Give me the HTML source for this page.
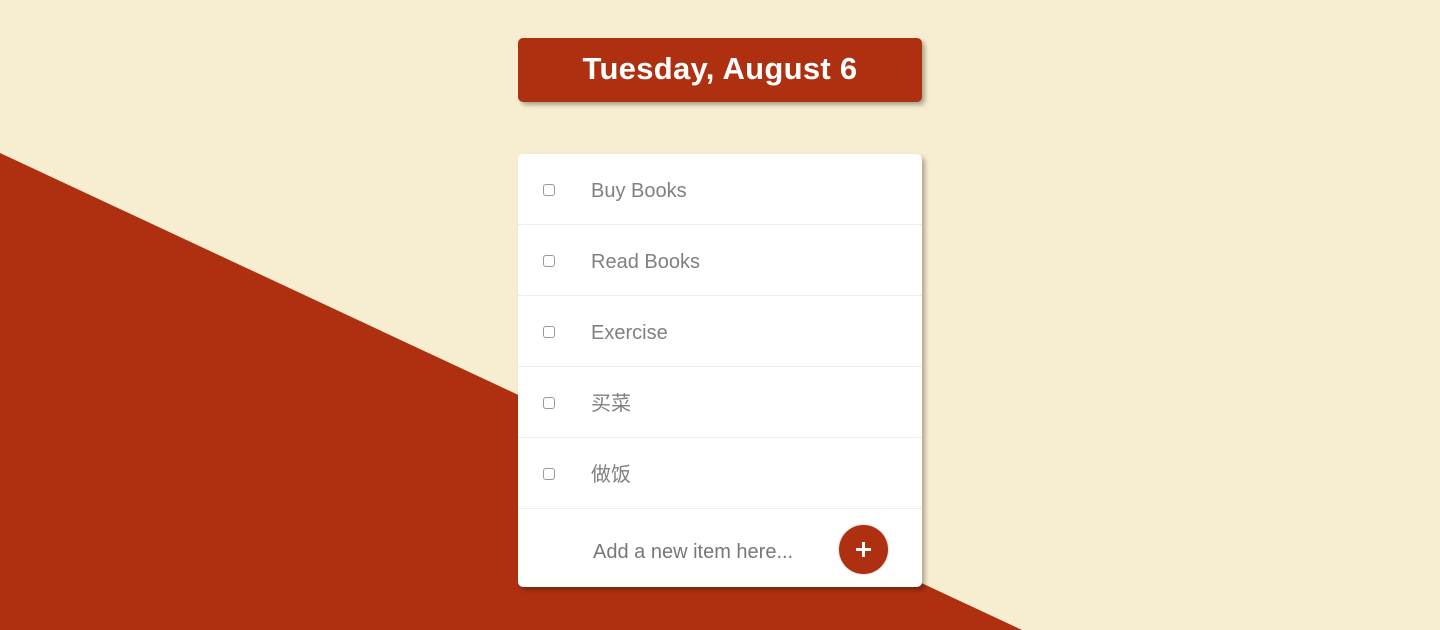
<!DOCTYPE html>
<html><head><meta charset="utf-8"><style>
html,body{margin:0;padding:0;width:1440px;height:630px;overflow:hidden;background:#F7EDD0;font-family:"Liberation Sans","Noto Sans CJK SC",sans-serif;position:relative}
.tri{position:absolute;left:0;top:0}
.hdr{position:absolute;left:518px;top:38px;width:404px;height:64px;background:#AE3010;border-radius:5px;box-shadow:3px 3px 4px rgba(0,0,0,.3);color:#fff;font-weight:bold;font-size:31px;letter-spacing:0.3px;text-align:center;line-height:62px}
.card{position:absolute;left:518px;top:154px;width:404px;height:433px;background:#fff;border-radius:5px;box-shadow:3px 3px 5px rgba(0,0,0,.3)}
.row{height:70px;border-bottom:1px solid #eee;position:relative;font-size:20px;color:#808080;line-height:74px}
.cb{position:absolute;left:25px;top:30px;width:10px;height:10px;border:1px solid #999;border-radius:3px}
.t{position:absolute;left:73px;top:0}
.add{position:absolute;left:75px;top:374px;font-size:20px;color:#777;line-height:48px}
.btn{position:absolute;left:321px;top:371px;width:49px;height:49px;border-radius:50%;background:#AE3010;box-shadow:0 0 2px rgba(0,0,0,.3)}
.btn:before{content:"";position:absolute;left:17px;top:23px;width:15px;height:3px;background:#fff}
.btn:after{content:"";position:absolute;left:23px;top:17px;width:3px;height:15px;background:#fff}
</style></head><body>
<svg class="tri" width="1440" height="630"><polygon points="0,153 1022,630 0,630" fill="#AE3010"/></svg>
<div class="hdr">Tuesday, August 6</div>
<div class="card">
<div class="row"><span class="cb"></span><span class="t">Buy Books</span></div>
<div class="row"><span class="cb"></span><span class="t">Read Books</span></div>
<div class="row"><span class="cb"></span><span class="t">Exercise</span></div>
<div class="row"><span class="cb"></span><span class="t">买菜</span></div>
<div class="row"><span class="cb"></span><span class="t">做饭</span></div>
<div class="add">Add a new item here...</div>
<div class="btn"></div>
</div>
</body></html>
